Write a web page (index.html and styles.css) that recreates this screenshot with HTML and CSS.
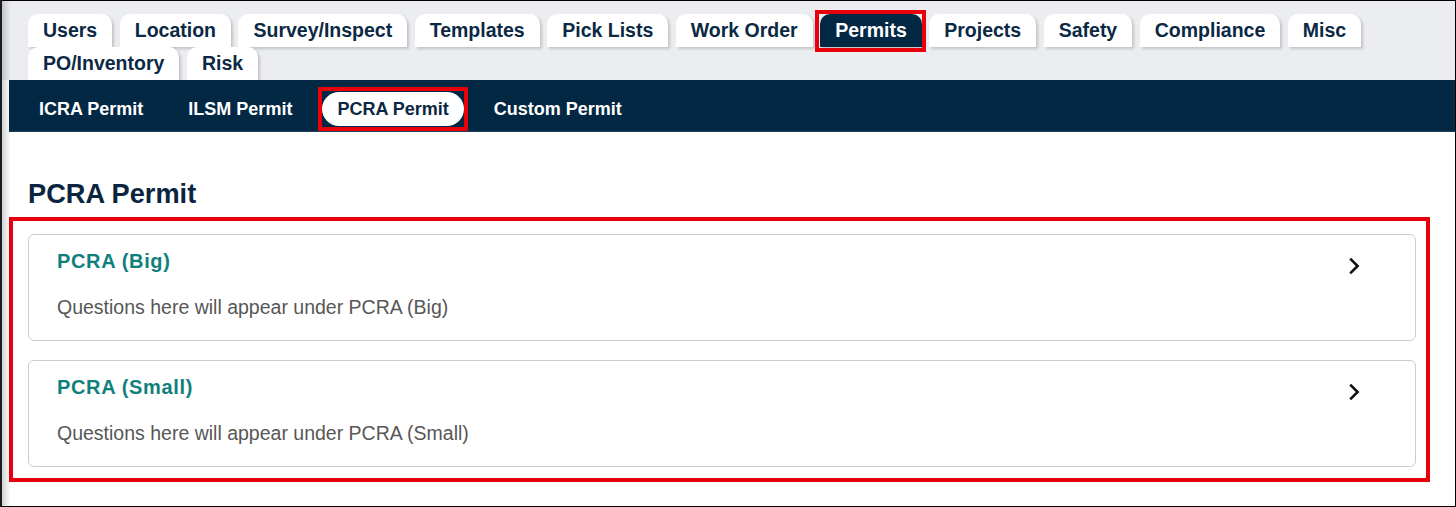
FILE: index.html
```html
<!DOCTYPE html>
<html>
<head>
<meta charset="utf-8">
<link rel="stylesheet" href="styles.css">
</head>
<body>
<div class="frame">
  <div class="tabs">
    <div class="tab">Users</div>
    <div class="tab">Location</div>
    <div class="tab">Survey/Inspect</div>
    <div class="tab">Templates</div>
    <div class="tab">Pick Lists</div>
    <div class="tab">Work Order</div>
    <div class="tab tab-active">Permits</div>
    <div class="tab">Projects</div>
    <div class="tab">Safety</div>
    <div class="tab">Compliance</div>
    <div class="tab">Misc</div>
    <div class="tab">PO/Inventory</div>
    <div class="tab">Risk</div>
  </div>
  <nav class="subnav">
    <div class="subitem">ICRA Permit</div>
    <div class="subitem">ILSM Permit</div>
    <div class="subitem subitem-active">PCRA Permit</div>
    <div class="subitem">Custom Permit</div>
  </nav>
  <main class="content">
    <h1 class="heading">PCRA Permit</h1>
    <div class="cards">
      <div class="card">
        <div class="card-body">
          <div class="card-title">PCRA (Big)</div>
          <div class="card-desc">Questions here will appear under PCRA (Big)</div>
        </div>
        <svg class="chev" width="12" height="18" viewBox="0 0 12 18"><path d="M2.2 1.6 L9.6 9 L2.2 16.4" fill="none" stroke="#111" stroke-width="2.6" stroke-linejoin="miter"/></svg>
      </div>
      <div class="card">
        <div class="card-body">
          <div class="card-title">PCRA (Small)</div>
          <div class="card-desc">Questions here will appear under PCRA (Small)</div>
        </div>
        <svg class="chev" width="12" height="18" viewBox="0 0 12 18"><path d="M2.2 1.6 L9.6 9 L2.2 16.4" fill="none" stroke="#111" stroke-width="2.6" stroke-linejoin="miter"/></svg>
      </div>
    </div>
  </main>
</div>
</body>
</html>
```
FILE: styles.css
```css
html, body {
  margin: 0;
  padding: 0;
  background: #fff;
}
body {
  font-family: "Liberation Sans", Arial, sans-serif;
}
.frame {
  position: relative;
  width: 1456px;
  height: 507px;
  box-sizing: border-box;
  border: 1px solid #000;
  border-left: 2px solid #1a1d22;
  background: #fff;
  overflow: hidden;
  display: flex;
  flex-direction: column;
}
.frame::before {
  content: "";
  position: absolute;
  left: 0;
  top: 0;
  bottom: 0;
  width: 9px;
  background: linear-gradient(to right, rgba(0,0,0,0.17), rgba(0,0,0,0.02) 85%, rgba(0,0,0,0));
  pointer-events: none;
  z-index: 5;
}
.tabs {
  background: #ecedf1;
  display: flex;
  flex-wrap: wrap;
  column-gap: 7.5px;
  row-gap: 0;
  padding: 13px 60px 0 26px;
  height: 79px;
  box-sizing: border-box;
  align-content: flex-start;
}
.tab {
  height: 33px;
  line-height: 33px;
  padding: 0 15px;
  background: #fff;
  color: #0b2844;
  font-weight: bold;
  font-size: 19.5px;
  border-radius: 10px 10px 0 0;
  box-shadow: 2px 2px 3px rgba(0,0,0,0.18);
}
.tab-active {
  background: #022844;
  color: #fff;
  position: relative;
  z-index: 2;
}
.tab-active::after {
  content: "";
  position: absolute;
  left: -5px;
  right: -4px;
  top: -4px;
  bottom: -5px;
  border: 4px solid #e8000b;
  pointer-events: none;
}
.subnav {
  margin-left: 7px;
  height: 52px;
  box-sizing: border-box;
  background: #022844;
  display: flex;
  gap: 15px;
  padding: 12px 15px 6px;
  box-shadow: inset 0 -1px 1px rgba(255,255,255,0.12);
}
.subitem {
  height: 34px;
  line-height: 34px;
  padding: 0 15px;
  color: #fff;
  font-weight: bold;
  font-size: 18px;
  border-radius: 17px;
}
.subitem-active {
  background: #fff;
  color: #0b2844;
  position: relative;
}
.subitem-active::after {
  content: "";
  position: absolute;
  left: -4px;
  right: -4px;
  top: -5px;
  bottom: -5px;
  border: 4px solid #e8000b;
  pointer-events: none;
}
.content {
  margin-left: 7px;
  padding-top: 46px;
}
.heading {
  margin: 0 0 7px 19px;
  font-size: 27.2px;
  line-height: 32px;
  font-weight: bold;
  color: #0b2540;
}
.cards {
  width: 1421px;
  box-sizing: border-box;
  border: 4px solid #e8000b;
  padding: 13px 10px 11px 15px;
  display: flex;
  flex-direction: column;
  gap: 19px;
}
.card {
  height: 107px;
  box-sizing: border-box;
  border: 1px solid #c9cdd3;
  border-radius: 6px;
  padding: 14px 55px 21px 28px;
  display: flex;
  align-items: flex-start;
}
.card-body {
  flex: 1;
}
.card-title {
  font-size: 20px;
  letter-spacing: 0.65px;
  line-height: 24px;
  font-weight: bold;
  color: #107f7c;
}
.card-desc {
  margin-top: 22px;
  font-size: 19.5px;
  line-height: 24px;
  color: #575757;
}
.chev {
  margin-top: 8px;
  flex: none;
}
```
